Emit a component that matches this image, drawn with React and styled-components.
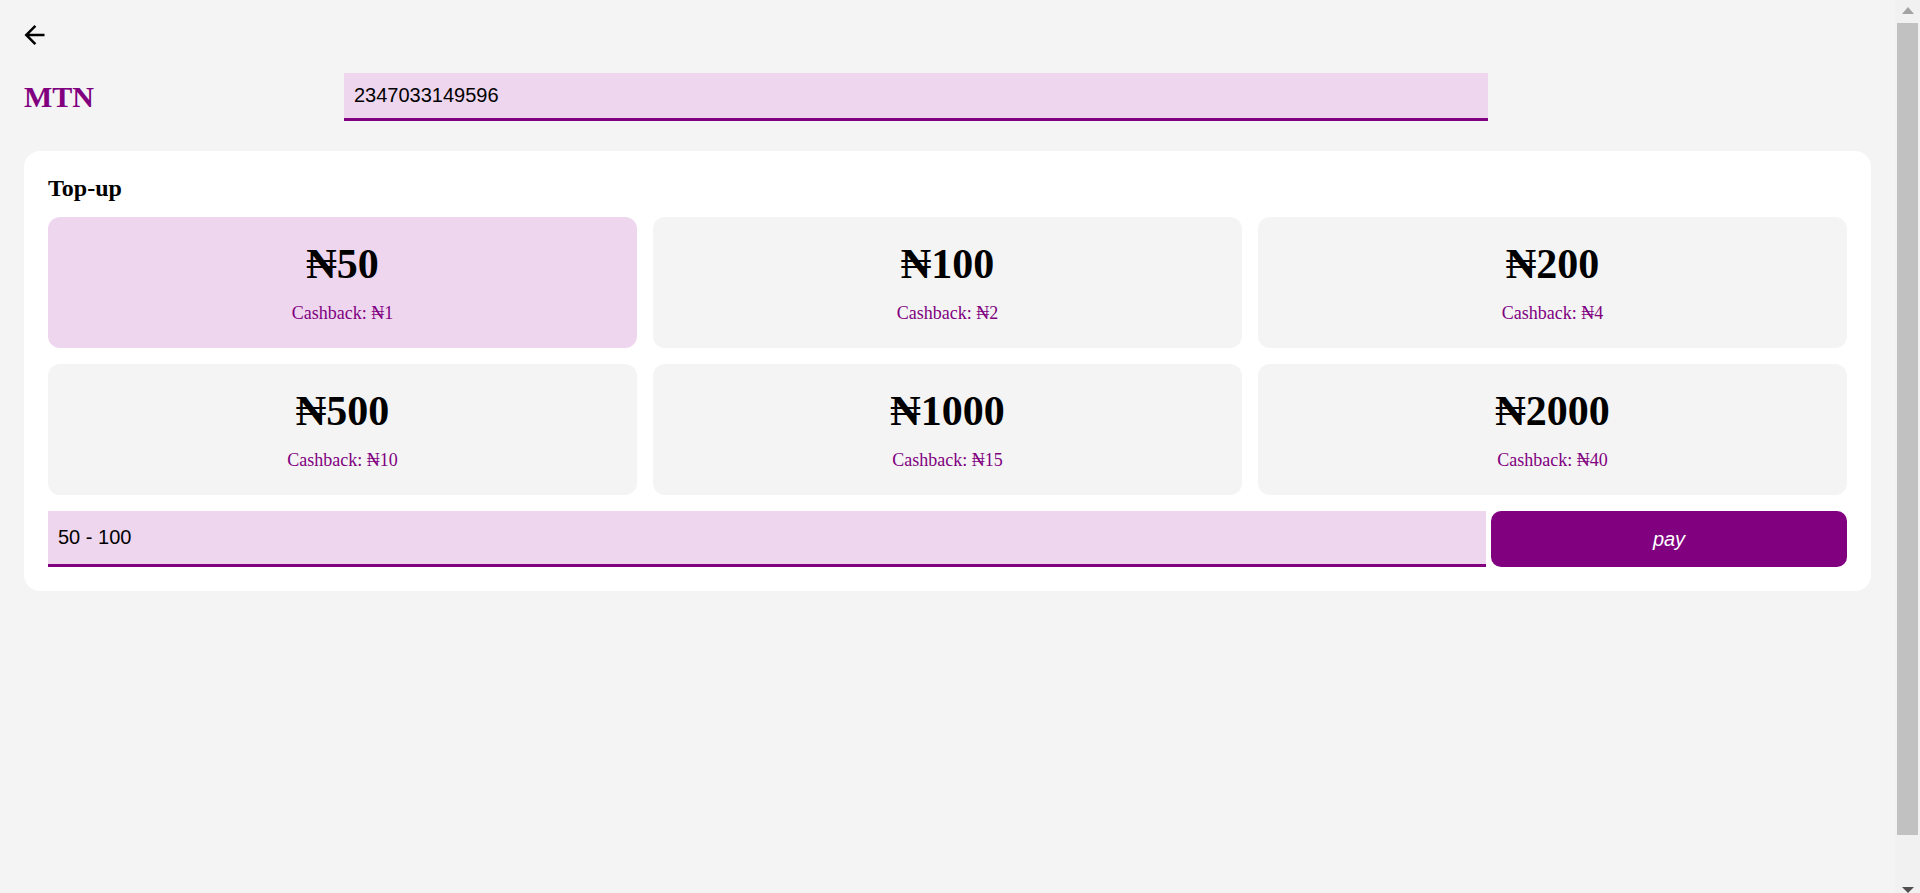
import React, { useState } from 'react';
import styled, { createGlobalStyle } from 'styled-components';

const GlobalStyle = createGlobalStyle`
    body {
        margin: 0;
        font-family: 'Liberation Serif', 'DejaVu Serif', serif;
        background: #F4F4F4;
        overflow: hidden;
    }
`;

const Layout = styled.div`
    display: flex;
    height: 100vh;
`;

const Page = styled.main`
    flex: 1;
    min-width: 0;
    padding: 25px 24px 0;
`;

const ScrollRail = styled.aside`
    flex: none;
    width: 25px;
    display: flex;
    flex-direction: column;
    align-items: center;
    background: #F1F1F1;
`;

const RailArrow = styled.span`
    width: 0;
    height: 0;
    border-left: 6px solid transparent;
    border-right: 6px solid transparent;
    ${(p) => (p.$down
        ? 'border-top: 6px solid #505050; margin-top: auto;'
        : 'border-bottom: 7px solid #A3A3A3; margin-top: 7px;')}
`;

const RailThumb = styled.span`
    width: 21px;
    height: 812px;
    margin-top: 9px;
    background: #C1C1C1;
`;

const BackButton = styled.button`
    display: block;
    padding: 0;
    border: 0;
    background: none;
    cursor: pointer;
    color: #000000;

    svg {
        display: block;
    }
`;

const Header = styled.div`
    display: grid;
    grid-template-columns: 320px 1144px;
    align-items: center;
    margin-top: 28px;
`;

const Brand = styled.h1`
    margin: 0;
    font-size: 30px;
    font-weight: 700;
    color: #800080;
`;

const Field = styled.input`
    box-sizing: border-box;
    width: 100%;
    height: ${(p) => p.$height}px;
    padding: 0 10px;
    border: 0;
    border-bottom: 3px solid #800080;
    background: #EED6EE;
    font-family: 'Liberation Sans', Arial, sans-serif;
    font-size: 20px;
    color: #000000;
    outline: none;
`;

const Card = styled.section`
    display: flex;
    flex-direction: column;
    gap: 16px;
    margin-top: 30px;
    padding: 24px;
    background: #FFFFFF;
    border-radius: 16px;
`;

const Title = styled.h2`
    margin: 0;
    font-size: 24px;
    line-height: 26px;
    font-weight: 700;
    color: #000000;
`;

const Grid = styled.div`
    display: grid;
    grid-template-columns: repeat(3, 1fr);
    gap: 16px;
`;

const Tile = styled.button`
    display: flex;
    flex-direction: column;
    align-items: center;
    gap: 16px;
    padding: 24px 0;
    border: 0;
    border-radius: 12px;
    background: ${(p) => (p.$active ? '#EED6EE' : '#F4F4F4')};
    font-family: 'Liberation Serif', 'DejaVu Serif', serif;
    cursor: pointer;
`;

const Price = styled.span`
    font-size: 42px;
    line-height: 46px;
    font-weight: 700;
    color: #000000;
`;

const Cashback = styled.span`
    font-size: 18px;
    line-height: 21px;
    color: #800080;
`;

const PayRow = styled.form`
    display: grid;
    grid-template-columns: 1fr 356px;
    gap: 5px;
    margin: 0;
`;

const PayButton = styled.button`
    height: 56px;
    border: 0;
    border-radius: 10px;
    background: #800080;
    color: #FFFFFF;
    font-family: 'Liberation Sans', Arial, sans-serif;
    font-size: 20px;
    font-style: italic;
    cursor: pointer;
`;

const plans = [
    { amount: 50, cashback: 1 },
    { amount: 100, cashback: 2 },
    { amount: 200, cashback: 4 },
    { amount: 500, cashback: 10 },
    { amount: 1000, cashback: 15 },
    { amount: 2000, cashback: 40 },
];

const App = () => {
    const [selected, setSelected] = useState(50);

    return (
        <>
            <GlobalStyle />
            <Layout>
                <Page>
                    <BackButton type="button" aria-label="back">
                        <svg width="21" height="20" viewBox="4 4 16 16">
                            <path fill="currentColor" d="M20 11H7.83l5.59-5.59L12 4l-8 8 8 8 1.41-1.41L7.83 13H20v-2z" />
                        </svg>
                    </BackButton>
                    <Header>
                        <Brand>MTN</Brand>
                        <Field $height={48} defaultValue="2347033149596" />
                    </Header>
                    <Card>
                        <Title>Top-up</Title>
                        <Grid>
                            {plans.map((plan) => (
                                <Tile
                                    key={plan.amount}
                                    type="button"
                                    $active={selected === plan.amount}
                                    onClick={() => setSelected(plan.amount)}
                                >
                                    <Price>₦{plan.amount}</Price>
                                    <Cashback>Cashback: ₦{plan.cashback}</Cashback>
                                </Tile>
                            ))}
                        </Grid>
                        <PayRow onSubmit={(e) => e.preventDefault()}>
                            <Field $height={56} defaultValue="50 - 100" />
                            <PayButton type="submit">pay</PayButton>
                        </PayRow>
                    </Card>
                </Page>
                <ScrollRail aria-hidden="true">
                    <RailArrow />
                    <RailThumb />
                    <RailArrow $down />
                </ScrollRail>
            </Layout>
        </>
    );
};

export default App;
